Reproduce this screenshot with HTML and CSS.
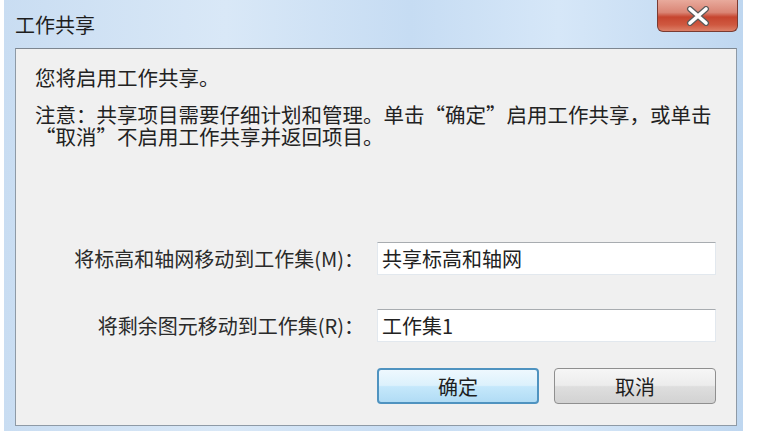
FILE: index.html
```html
<!DOCTYPE html>
<html lang="zh-CN">
<head>
    <meta charset="UTF-8">
    <meta name="viewport" content="width=device-width, initial-scale=1.0">
    <title>工作共享</title>
    <link rel="stylesheet" href="styles.css">
</head>
<body>
    <div class="window">
        <div class="titlebar">
            <span class="title">工作共享</span>
            <button type="button" class="close" aria-label="关闭">
                <svg width="24" height="20" viewBox="0 0 24 20">
                    <path d="M4 3 L20 17 M20 3 L4 17" stroke="#5a5a5a" stroke-width="6" stroke-linecap="round"/>
                    <path d="M4 3 L20 17 M20 3 L4 17" stroke="#ffffff" stroke-width="3.6" stroke-linecap="round"/>
                </svg>
            </button>
        </div>
        <div class="panel">
            <p class="msg">您将启用工作共享。</p>
            <p class="msg note">注意：共享项目需要仔细计划和管理。单击“确定”启用工作共享，或单击<br>“取消”不启用工作共享并返回项目。</p>

            <form class="fields">
                <label for="gridSet">将标高和轴网移动到工作集(M)：</label>
                <input type="text" id="gridSet" value="共享标高和轴网">

                <label for="restSet">将剩余图元移动到工作集(R)：</label>
                <input type="text" id="restSet" value="工作集1">

                <div class="buttons">
                    <button type="button" class="btn default">确定</button>
                    <button type="button" class="btn">取消</button>
                </div>
            </form>
        </div>
    </div>
</body>
</html>
```

FILE: styles.css
```css
body {margin: 0; background: #ffffff; font-family: "Noto Sans CJK SC", "Noto Sans", sans-serif; color: #222222}
.window {position: relative; width: 739px; height: 431px; margin-left: 4px; padding: 0 6px 5px 11px; box-sizing: border-box; display: flex; flex-direction: column;
    background: linear-gradient(90deg, #c9ddf2 0%, #d9e8f7 30%, #c6dcf3 55%, #d6e7f8 75%, #bfd7f0 100%)}
.titlebar {height: 48px; flex: none}
.title {display: block; padding-top: 14px; font-size: 20px; line-height: 22px; color: #1e1e1e}
.close {position: absolute; top: 0; right: 5px; width: 81px; height: 32px; padding: 0; border: 1px solid #7a3b32; border-top: none; border-radius: 0 0 6px 6px; cursor: pointer;
    display: flex; align-items: center; justify-content: center;
    background: linear-gradient(180deg, #e8aa9c 0%, #da8575 40%, #c6452f 55%, #cf5840 80%, #dc8068 100%)}
.panel {flex: 1; background: #f0f0f0; border: 1px solid #8e9aa6; border-top-color: #7d8690; padding: 17px 20px 0 19px}
.msg {margin: 0; font-size: 20.5px; line-height: 22px; white-space: nowrap}
.note {margin-top: 15px}
.fields {display: grid; grid-template-columns: 1fr 339px; column-gap: 21px; row-gap: 34px; align-items: center; margin-top: 95px}
.fields label {text-align: right; font-size: 20px; color: #2a2a2a; margin-right: -8px}
.fields input {height: 33px; box-sizing: border-box; padding: 0 4px; font-family: inherit; font-size: 20px; color: #222222; background: #ffffff;
    border: 1px solid #e2e8ee; border-top-color: #a8acb0; outline: none}
.buttons {grid-column: 2; display: flex; gap: 15px; margin-top: -8px}
.btn {width: 162px; height: 36px; font-family: inherit; font-size: 20px; color: #1e1e1e; border: 1px solid #8f8f8f; border-radius: 4px; cursor: pointer;
    background: linear-gradient(180deg, #f6f6f6 0%, #ececec 48%, #dedede 52%, #d2d2d2 100%)}
.btn.default {border: 2px solid #4f93c0; background: linear-gradient(180deg, #eef8fe 0%, #dcf1fc 48%, #c5e8fb 52%, #b1dcf5 100%)}
```
